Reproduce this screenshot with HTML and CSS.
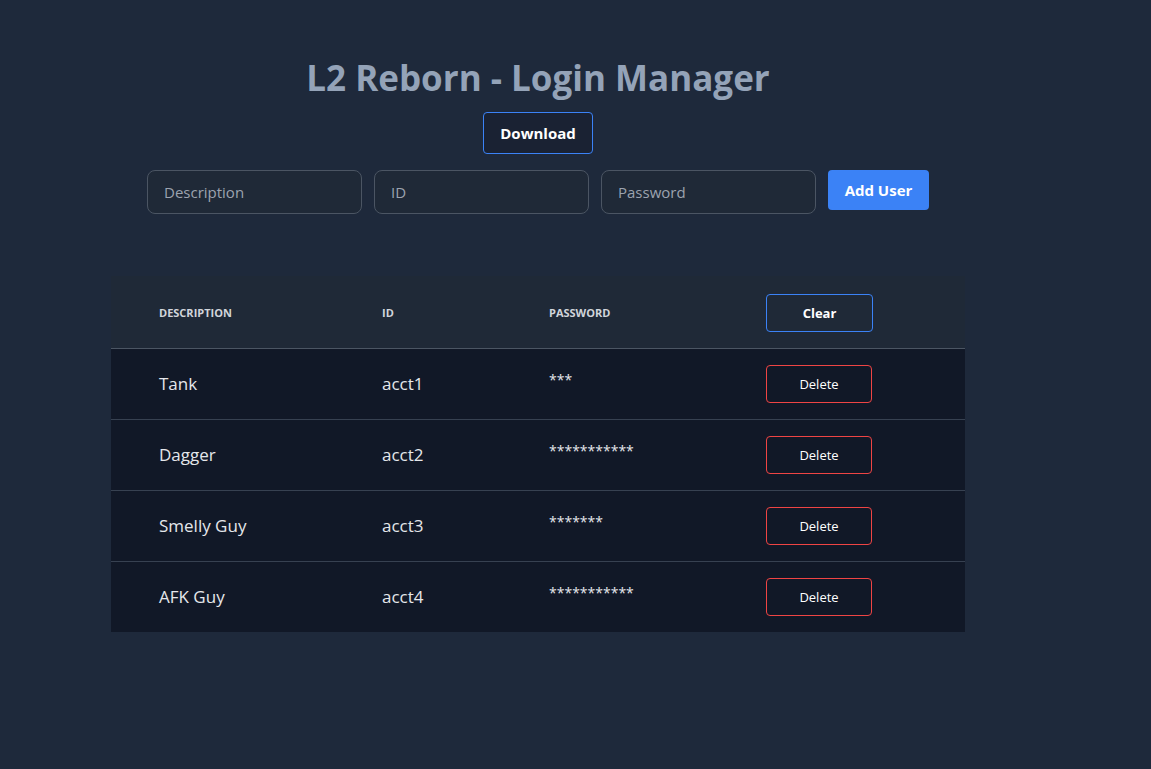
FILE: index.html
```html
<!DOCTYPE html>
<html lang="en">
<head>
<meta charset="utf-8">
<title>L2 Reborn - Login Manager</title>
<link rel="stylesheet" href="styles.css">
</head>
<body>
<main class="app">
  <h1 class="title">L2 Reborn - Login Manager</h1>
  <button class="btn btn-outline-blue btn-download">Download</button>
  <form class="add-form">
    <input class="field" type="text" placeholder="Description">
    <input class="field" type="text" placeholder="ID">
    <input class="field" type="password" placeholder="Password">
    <button type="button" class="btn btn-primary">Add User</button>
  </form>
  <table class="accounts">
    <colgroup>
      <col class="c-desc"><col class="c-id"><col class="c-pass"><col class="c-act">
    </colgroup>
    <thead>
      <tr>
        <th>Description</th>
        <th>ID</th>
        <th>Password</th>
        <th><button class="btn btn-outline-blue btn-clear">Clear</button></th>
      </tr>
    </thead>
    <tbody>
      <tr><td>Tank</td><td>acct1</td><td class="pw">***</td><td><button class="btn btn-delete">Delete</button></td></tr>
      <tr><td>Dagger</td><td>acct2</td><td class="pw">***********</td><td><button class="btn btn-delete">Delete</button></td></tr>
      <tr><td>Smelly Guy</td><td>acct3</td><td class="pw">*******</td><td><button class="btn btn-delete">Delete</button></td></tr>
      <tr><td>AFK Guy</td><td>acct4</td><td class="pw">***********</td><td><button class="btn btn-delete">Delete</button></td></tr>
    </tbody>
  </table>
</main>
</body>
</html>
```

FILE: styles.css
```css
* { box-sizing: border-box; }
html, body {
  margin: 0;
  padding: 0;
  background: #1e293b;
  font-family: "Open Sans", "Noto Sans", sans-serif;
  color: #e5e7eb;
}
.app {
  width: 1076px;
  display: flex;
  flex-direction: column;
  align-items: center;
  padding-top: 56px;
}
.title {
  margin: 0;
  font-size: 35px;
  line-height: 44px;
  font-weight: 700;
  color: #94a3b8;
}
.btn {
  font-family: inherit;
  cursor: pointer;
  border-radius: 4px;
  color: #ffffff;
}
.btn-outline-blue {
  background: #1a2233;
  border: 1px solid #3b82f6;
}
.btn-download {
  margin-top: 12px;
  width: 110px;
  height: 42px;
  font-size: 15px;
  font-weight: 700;
}
.add-form {
  margin-top: 16px;
  display: flex;
  align-items: flex-start;
  gap: 12px;
}
.field {
  width: 215px;
  height: 44px;
  padding: 0 16px;
  background: #1f2937;
  border: 1px solid #4b5563;
  border-radius: 8px;
  font-family: inherit;
  font-size: 15px;
  color: #e5e7eb;
}
.field::placeholder { color: #9ca3af; }
.btn-primary {
  width: 101px;
  height: 40px;
  background: #3b82f6;
  border: none;
  font-size: 15px;
  font-weight: 700;
}
.accounts {
  margin-top: 62px;
  width: 854px;
  border-collapse: collapse;
  table-layout: fixed;
}
.c-desc { width: 223px; }
.c-id { width: 167px; }
.c-pass { width: 217px; }
.c-act { width: 247px; }
.accounts thead tr {
  background: #1f2937;
  height: 72px;
  border-bottom: 1px solid #4b5563;
}
.accounts th {
  text-align: left;
  padding: 2px 0 0 48px;
  font-size: 11px;
  font-weight: 700;
  text-transform: uppercase;
  color: #d1d5db;
}
.accounts tbody tr {
  background: #111827;
  height: 71px;
  border-bottom: 1px solid #374151;
}
.accounts tbody tr:last-child { border-bottom: none; height: 71px; }
.accounts td {
  padding: 0 0 0 48px;
  font-size: 17px;
  color: #e5e7eb;
}
.accounts td.pw { font-size: 14px; padding-bottom: 8px; }
.btn-clear {
  width: 107px;
  height: 38px;
  font-size: 13px;
  font-weight: 700;
  background: #1f2937;
}
.btn-delete {
  width: 106px;
  height: 38px;
  font-size: 13px;
  background: #111827;
  border: 1px solid #ef4444;
}
```
